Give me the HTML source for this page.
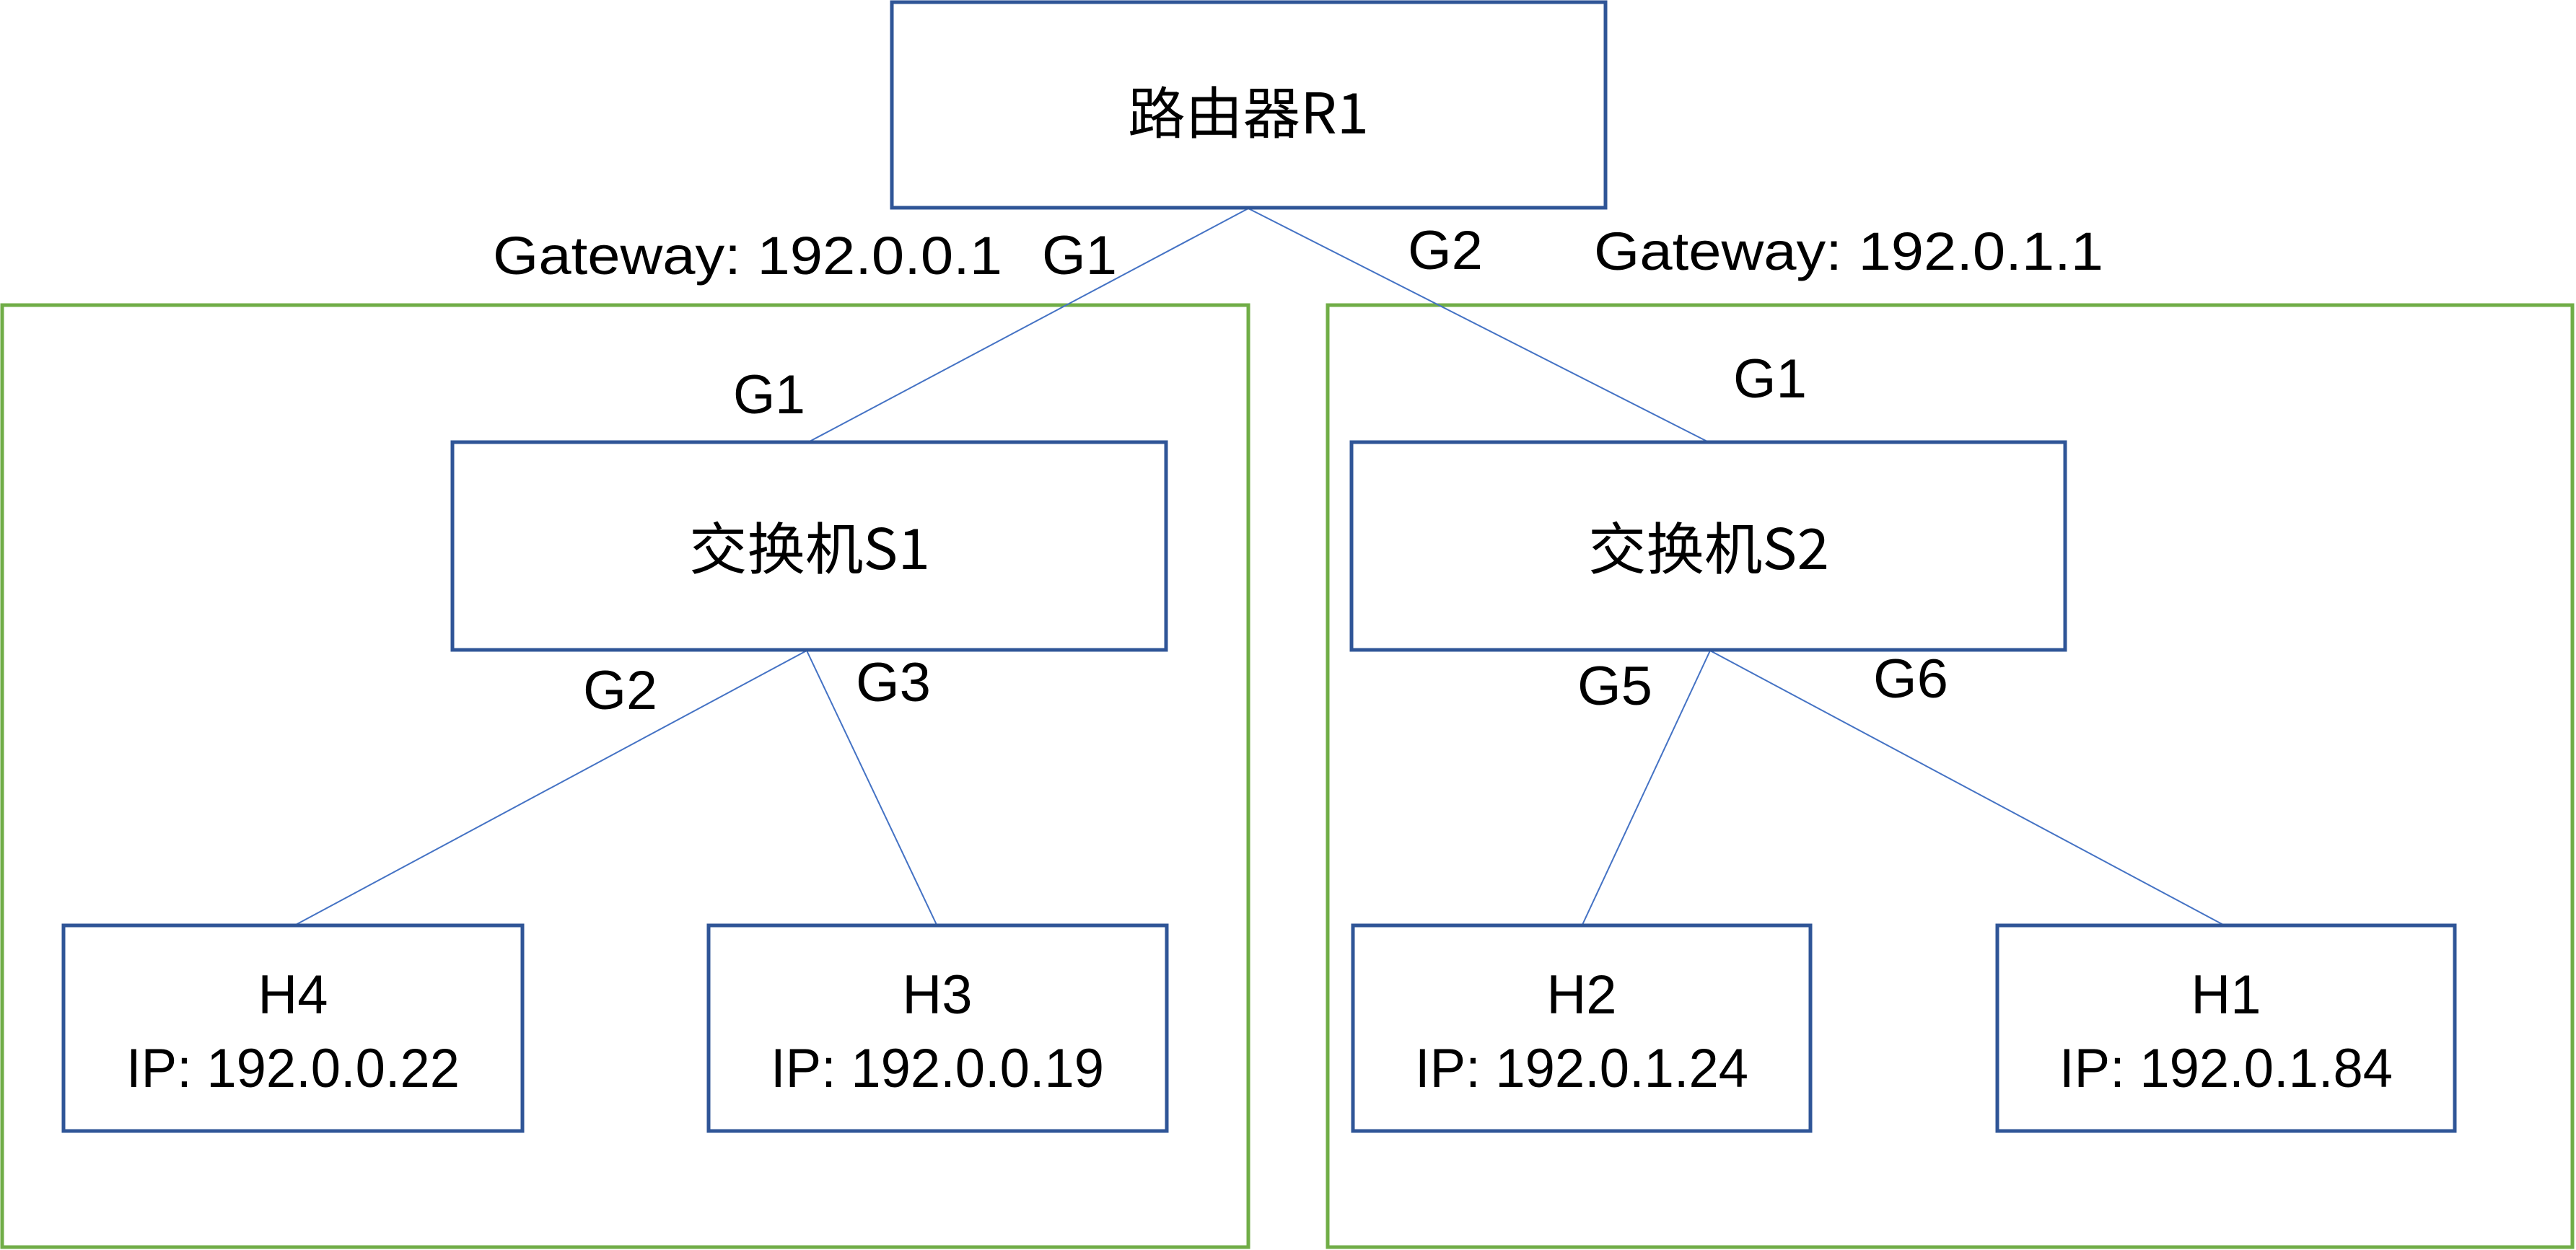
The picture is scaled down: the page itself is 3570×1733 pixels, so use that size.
<!DOCTYPE html>
<html><head><meta charset="utf-8"><style>
html,body{margin:0;padding:0;background:#fff;}
svg{display:block;}
text{font-family:"Liberation Sans","Noto Sans CJK SC",sans-serif;fill:#000;}
.c{font-family:"Noto Sans CJK SC","Liberation Sans",sans-serif;}
</style></head><body>
<svg width="3570" height="1733" viewBox="0 0 3570 1733" xmlns="http://www.w3.org/2000/svg">
<g fill="none" stroke="#70AD47" stroke-width="5">
<rect x="3" y="423" width="1727" height="1306"/>
<rect x="1840" y="423" width="1725" height="1306"/>
</g>
<g stroke="#4472C4" stroke-width="2">
<line x1="1730" y1="289" x2="1122" y2="612"/>
<line x1="1730" y1="289" x2="2366" y2="612"/>
<line x1="1118" y1="902" x2="410" y2="1282"/>
<line x1="1118" y1="902" x2="1298" y2="1282"/>
<line x1="2370" y1="902" x2="2193" y2="1282"/>
<line x1="2370" y1="902" x2="3081" y2="1282"/>
</g>
<g fill="#fff" stroke="#2F5597" stroke-width="5">
<rect x="1236" y="3" width="989" height="285"/>
<rect x="627" y="613" width="989" height="288"/>
<rect x="1873" y="613" width="989" height="288"/>
<rect x="88" y="1283" width="636" height="285"/>
<rect x="982" y="1283" width="635" height="285"/>
<rect x="1875" y="1283" width="634" height="285"/>
<rect x="2768" y="1283" width="634" height="285"/>
</g>
<g font-size="78" text-anchor="middle" dominant-baseline="central">
<text class="c" x="1730" y="152" textLength="334" lengthAdjust="spacingAndGlyphs">路由器R1</text>
<text class="c" x="1122" y="756" textLength="334" lengthAdjust="spacingAndGlyphs">交换机S1</text>
<text class="c" x="2368" y="756" textLength="334" lengthAdjust="spacingAndGlyphs">交换机S2</text>
</g>
<g font-size="76" text-anchor="middle">
<text x="406" y="1405">H4</text>
<text x="406" y="1507" textLength="462" lengthAdjust="spacingAndGlyphs">IP: 192.0.0.22</text>
<text x="1299" y="1405">H3</text>
<text x="1299" y="1507" textLength="462" lengthAdjust="spacingAndGlyphs">IP: 192.0.0.19</text>
<text x="2192" y="1405">H2</text>
<text x="2192" y="1507" textLength="462" lengthAdjust="spacingAndGlyphs">IP: 192.0.1.24</text>
<text x="3085" y="1405">H1</text>
<text x="3085" y="1507" textLength="462" lengthAdjust="spacingAndGlyphs">IP: 192.0.1.84</text>
</g>
<g font-size="74">
<text x="683" y="380" textLength="706" lengthAdjust="spacingAndGlyphs">Gateway: 192.0.0.1</text>
<text x="2209" y="374" textLength="706" lengthAdjust="spacingAndGlyphs">Gateway: 192.0.1.1</text>
</g>
<g font-size="76">
<text x="1444" y="380" textLength="104" lengthAdjust="spacingAndGlyphs">G1</text>
<text x="1951" y="373" textLength="104" lengthAdjust="spacingAndGlyphs">G2</text>
<text x="1016" y="573" textLength="100" lengthAdjust="spacingAndGlyphs">G1</text>
<text x="2402" y="551" textLength="102" lengthAdjust="spacingAndGlyphs">G1</text>
<text x="808" y="983" textLength="103" lengthAdjust="spacingAndGlyphs">G2</text>
<text x="1186" y="972" textLength="104" lengthAdjust="spacingAndGlyphs">G3</text>
<text x="2186" y="977" textLength="104" lengthAdjust="spacingAndGlyphs">G5</text>
<text x="2596" y="967" textLength="104" lengthAdjust="spacingAndGlyphs">G6</text>
</g>
</svg>
</body></html>
